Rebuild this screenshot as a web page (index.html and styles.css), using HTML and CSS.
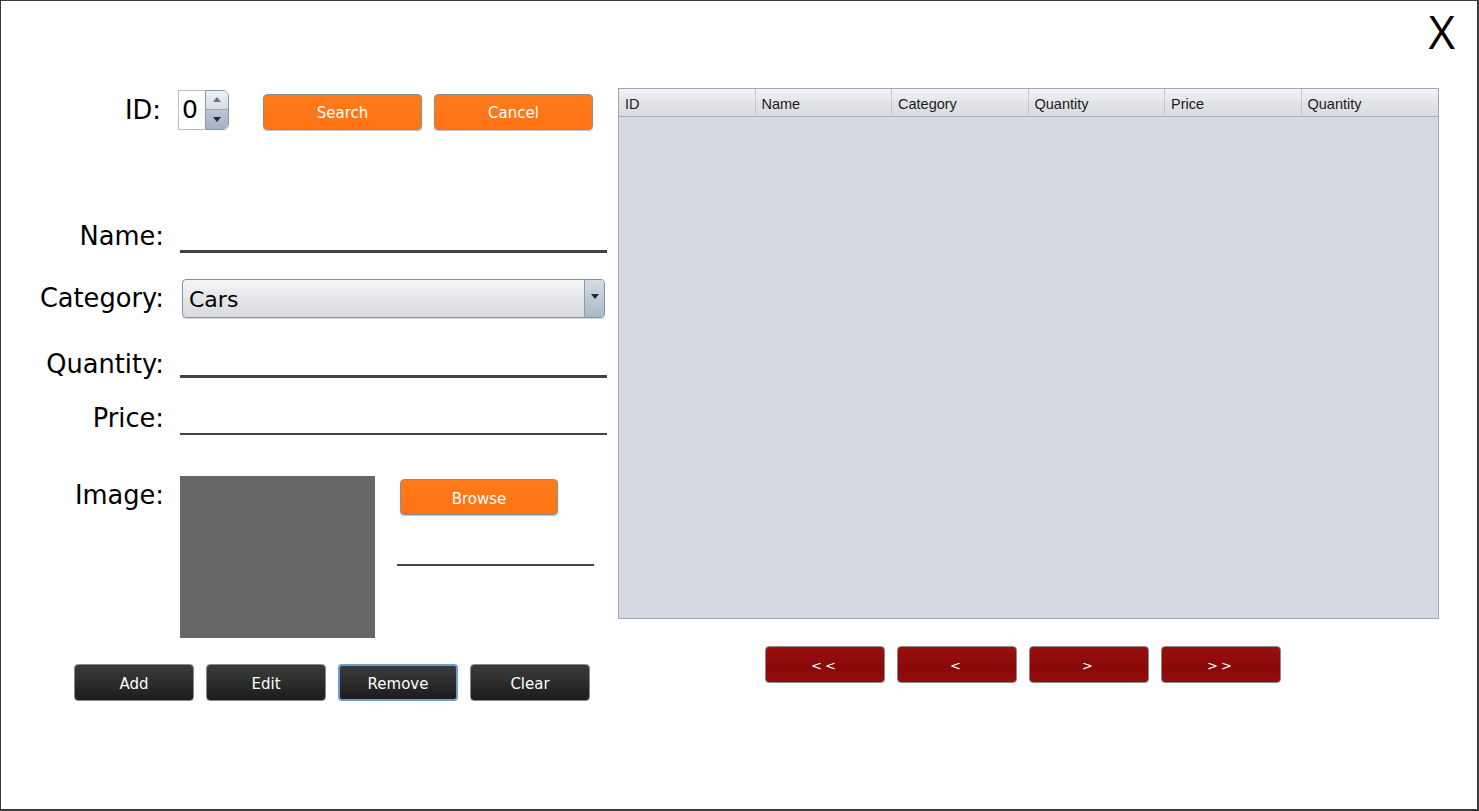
FILE: index.html
```html
<!DOCTYPE html>
<html lang="en">
<head>
<meta charset="utf-8">
<title>Products</title>
<link rel="stylesheet" href="styles.css">
</head>
<body>
<div class="window">
  <div class="topbar"><span class="close">X</span></div>
  <div class="content">
    <div class="form">
      <div class="row row-id">
        <label class="lbl lbl-id">ID:</label>
        <div class="spinner">
          <span class="spin-val">0</span>
          <span class="spin-btns">
            <span class="spin-up"><svg width="8" height="5" viewBox="0 0 8 5"><path d="M0 5 L4 0 L8 5Z" fill="#6a7482"/></svg></span>
            <span class="spin-down"><svg width="8" height="5" viewBox="0 0 8 5"><path d="M0 0 L4 5 L8 0Z" fill="#1f2a38"/></svg></span>
          </span>
        </div>
        <button class="btn-orange btn-search">Search</button>
        <button class="btn-orange btn-cancel">Cancel</button>
      </div>
      <div class="row row-name">
        <label class="lbl lbl-bottom">Name:</label>
        <div class="field field-thick"></div>
      </div>
      <div class="row row-category">
        <label class="lbl">Category:</label>
        <div class="combo">
          <span class="combo-val">Cars</span>
          <span class="combo-arrow"><svg width="8" height="5" viewBox="0 0 8 5"><path d="M0 0 L4 5 L8 0Z" fill="#1f2a38"/></svg></span>
        </div>
      </div>
      <div class="row row-quantity">
        <label class="lbl lbl-bottom lbl-q">Quantity:</label>
        <div class="field field-thick"></div>
      </div>
      <div class="row row-price">
        <label class="lbl lbl-bottom">Price:</label>
        <div class="field field-thin"></div>
      </div>
      <div class="row row-image">
        <label class="lbl lbl-img">Image:</label>
        <div class="image-box"></div>
        <div class="image-side">
          <button class="btn-orange btn-browse">Browse</button>
          <div class="path-line"></div>
        </div>
      </div>
      <div class="row row-actions">
        <button class="btn-dark">Add</button>
        <button class="btn-dark">Edit</button>
        <button class="btn-dark btn-focus">Remove</button>
        <button class="btn-dark">Clear</button>
      </div>
    </div>
    <div class="side">
      <div class="table">
        <div class="thead">
          <div class="th">ID</div>
          <div class="th">Name</div>
          <div class="th">Category</div>
          <div class="th">Quantity</div>
          <div class="th">Price</div>
          <div class="th">Quantity</div>
        </div>
        <div class="tbody"></div>
      </div>
      <div class="pager">
        <button class="btn-red">&lt;&lt;</button>
        <button class="btn-red">&lt;</button>
        <button class="btn-red">&gt;</button>
        <button class="btn-red">&gt;&gt;</button>
      </div>
    </div>
  </div>
</div>
</body>
</html>
```
FILE: styles.css
```css
* { box-sizing: border-box; }
html, body { margin: 0; padding: 0; background: #fff; }
body { width: 1479px; height: 811px; overflow: hidden; }

.window {
  width: 1479px;
  height: 811px;
  border: 1px solid #3a3a3a;
  border-right-width: 2px;
  border-bottom-width: 2px;
  background: #fff;
  font-family: "DejaVu Sans", sans-serif;
  display: flex;
  flex-direction: column;
}

.topbar {
  height: 87px;
  display: flex;
  justify-content: flex-end;
  align-items: flex-start;
  padding: 7px 22px 0 0;
}
.close {
  font-family: "Open Sans", sans-serif;
  font-size: 46px;
  line-height: 46px;
  color: #000;
}

.content { display: flex; align-items: flex-start; }

.form { width: 617px; display: flex; flex-direction: column; }

.row { display: flex; }

.lbl {
  width: 163px;
  text-align: right;
  font-size: 25.7px;
  line-height: 25px;
  color: #000;
  flex: none;
}

/* ID row */
.row-id { height: 42px; align-items: center; }
.lbl-id { width: 160px; margin-top: 2px; }
.spinner {
  margin-left: 17px;
  margin-top: 1px;
  width: 51px;
  height: 40px;
  display: flex;
  flex: none;
}
.spin-val {
  width: 27px;
  height: 40px;
  border: 1px solid #b9bec6;
  border-right: none;
  background: #fff;
  font-size: 25px;
  line-height: 38px;
  padding-left: 3px;
}
.spin-btns {
  width: 24px;
  height: 40px;
  display: flex;
  flex-direction: column;
  border: 1px solid #8b97a6;
  border-radius: 0 6px 6px 0;
  overflow: hidden;
}
.spin-up, .spin-down {
  flex: 1;
  display: flex;
  align-items: center;
  justify-content: center;
}
.spin-up { background: linear-gradient(#eef1f5, #d7dde6); border-bottom: 1px solid #9aa6b5; }
.spin-down { background: linear-gradient(#bac6d4, #a3b2c4); }

.btn-orange {
  font-family: "DejaVu Sans", sans-serif;
  font-size: 15px;
  color: #fff;
  background: linear-gradient(#ff7b1c, #ff7314);
  border: 1px solid #8d8d8d;
  border-radius: 4px;
  box-shadow: 0 1px 1px rgba(0,0,0,0.25);
  height: 36px;
  width: 159px;
  padding: 3px 0 0;
  flex: none;
}
.btn-search { margin-left: 34px; margin-top: 5px; }
.btn-cancel { margin-left: 12px; margin-top: 5px; }

/* underline fields */
.row-name { margin-top: 83px; height: 40px; align-items: flex-end; }
.lbl-bottom { margin-bottom: 4px; }
.field { margin-left: 16px; width: 427px; height: 36px; }
.field-thick { border-bottom: 3px solid #434343; }
.field-thin { border-bottom: 2px solid #434343; }

.row-category { margin-top: 26px; height: 39px; align-items: center; }
.combo {
  margin-left: 18px;
  width: 423px;
  height: 39px;
  border: 1px solid #8a9099;
  border-radius: 4px;
  background: linear-gradient(#f4f5f7, #e2e3e7 60%, #d9dade);
  display: flex;
  overflow: hidden;
  box-shadow: 0 1px 1px rgba(0,0,0,0.15);
}
.combo-val {
  flex: 1;
  font-size: 22px;
  line-height: 38px;
  padding-left: 6px;
  padding-top: 1px;
  color: #000;
}
.combo-arrow {
  width: 20px;
  border-left: 1px solid #8e9aa9;
  background: linear-gradient(#d4dce6, #a9b8c9);
  display: flex;
  align-items: center;
  justify-content: center;
  padding-bottom: 4px;
}

.row-quantity { margin-top: 20px; height: 40px; align-items: flex-end; }
.lbl-q { margin-bottom: 1px; }
.row-price { margin-top: 17px; height: 40px; align-items: flex-end; }

/* image row */
.row-image { margin-top: 41px; height: 162px; align-items: flex-start; }
.lbl-img { margin-top: 7px; }
.image-box { margin-left: 16px; width: 195px; height: 162px; background: #666; flex: none; }
.image-side { margin-left: 22px; display: flex; flex-direction: column; align-items: flex-start; }
.btn-browse { margin-left: 3px; margin-top: 3px; width: 158px; }
.path-line { width: 197px; height: 51px; border-bottom: 2px solid #434343; }

/* action buttons */
.row-actions { margin-top: 26px; padding-left: 73px; gap: 12px; }
.btn-dark {
  width: 120px;
  height: 37px;
  padding: 2px 0 0;
  font-family: "DejaVu Sans", sans-serif;
  font-size: 15px;
  color: #fff;
  background: linear-gradient(#3c3c3c, #1c1c1c);
  border: 1px solid #8a8a8a;
  border-radius: 4px;
}
.btn-dark.btn-focus {
  border: 2px solid #6e9ccf;
}

/* right side */
.side { display: flex; flex-direction: column; align-items: flex-start; }
.table {
  width: 821px;
  height: 531px;
  border: 1px solid #a2a6ae;
  background: #d6d9e1;
  display: flex;
  flex-direction: column;
}
.thead {
  height: 28px;
  display: grid;
  grid-template-columns: repeat(6, 1fr);
  background: linear-gradient(#f2f3f5, #e3e4e8 50%, #dadbe0);
  border-bottom: 1px solid #a9adb5;
}
.th {
  font-family: "Liberation Sans", Arial, sans-serif;
  font-size: 14.5px;
  color: #1a1a1a;
  line-height: 27px;
  padding: 2px 0 0 6px;
  border-right: 1px solid #c3c6cc;
}
.th:last-child { border-right: none; }
.tbody { flex: 1; }

.pager { display: flex; gap: 12px; margin-top: 27px; margin-left: 147px; }
.btn-red {
  width: 120px;
  height: 37px;
  padding: 2px 0 0;
  font-family: "DejaVu Sans", sans-serif;
  font-size: 13px;
  letter-spacing: 3px;
  color: #fff;
  background: linear-gradient(#9b1010, #880909 60%, #930d0d);
  border: 1px solid #8a8a8a;
  border-radius: 4px;
}
```
